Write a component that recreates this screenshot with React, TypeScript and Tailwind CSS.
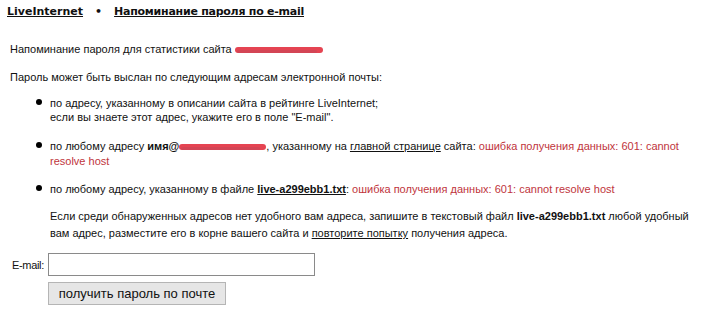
import * as React from "react";

function Redacted({ w }: { w: number }) {
  return (
    <span
      className="relative inline-block h-[10px] align-middle"
      style={{ width: w }}
    >
      <span className="absolute left-0 right-0 top-[2px] h-[6px] rounded-full bg-[#e2303f] opacity-90" />
      <span className="absolute left-[2px] right-[6px] top-[5px] h-[3px] rounded-full bg-[#b8485a] opacity-40" />
    </span>
  );
}

const err = "ошибка получения данных: 601: cannot resolve host";

export default function App() {
  return (
    <div className="h-[314px] w-[705px] bg-white pr-[4px] text-[11px] leading-[14px] text-[#111]" style={{ fontFamily: '"Liberation Sans", Arial, sans-serif' }}>
      <div
        className="flex items-center gap-[12px] px-[7px] pt-[5px] text-[11px] font-bold"
        style={{ fontFamily: '"DejaVu Sans", Verdana, sans-serif' }}
      >
        <a className="underline">LiveInternet</a>
        <span>•</span>
        <a className="underline tracking-[-0.25px]">Напоминание пароля по e-mail</a>
      </div>

      <p className="mt-[23px] pl-[10px]">
        Напоминание пароля для статистики сайта <Redacted w={88} />
      </p>

      <p className="mt-[14px] pl-[10px]">
        Пароль может быть выслан по следующим адресам электронной почты:
      </p>

      <ul className="mt-[12px] pl-[50px]">
        <li className="relative">
          <span className="absolute -left-[14px] top-[3px] h-[6px] w-[6px] rounded-full bg-black" />
          по адресу, указанному в описании сайта в рейтинге LiveInternet;
          <br />
          если вы знаете этот адрес, укажите его в поле "E-mail".
        </li>
        <li className="relative mt-[15px] leading-[15px]">
          <span className="absolute -left-[14px] top-[3px] h-[6px] w-[6px] rounded-full bg-black" />
          по любому адресу <b>имя@</b>
          <Redacted w={87} />, указанному на <a className="underline">главной странице</a> сайта:{" "}
          <span className="text-[#c0343c]">{err}</span>
        </li>
        <li className="relative mt-[13px]">
          <span className="absolute -left-[14px] top-[3px] h-[6px] w-[6px] rounded-full bg-black" />
          по любому адресу, указанному в файле <b className="underline">live-a299ebb1.txt</b>:{" "}
          <span className="text-[#c0343c]">{err}</span>
        </li>
      </ul>

      <p className="mt-[12px] pl-[50px] leading-[17px]">
        Если среди обнаруженных адресов нет удобного вам адреса, запишите в текстовый файл{" "}
        <b>live-a299ebb1.txt</b> любой удобный вам адрес, разместите его в корне вашего сайта и{" "}
        <a className="underline">повторите попытку</a> получения адреса.
      </p>

      <div className="mt-[11px] grid grid-cols-[48px_auto] items-center gap-y-[6px]">
        <label className="pr-[4px] text-right tracking-[-0.3px]">E-mail:</label>
        <input className="h-[23px] w-[267px] border border-[#8a8a8a] bg-white outline-none" />
        <span />
        <button
          className="h-[23px] w-[178px] whitespace-nowrap border border-[#b5b5b5] bg-[#e6e6e6] text-[13px] leading-[21px] text-[#111]"
          style={{ fontFamily: '"Liberation Sans", Tahoma, sans-serif' }}
        >
          получить пароль по почте
        </button>
      </div>
    </div>
  );
}
